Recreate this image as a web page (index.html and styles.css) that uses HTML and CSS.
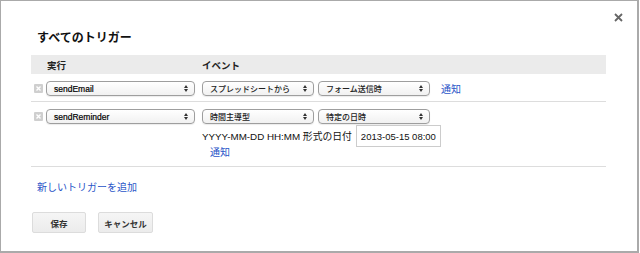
FILE: index.html
```html
<!DOCTYPE html>
<html lang="ja">
<head>
  <meta charset="UTF-8" />
  <title>すべてのトリガー</title>
  <link rel="stylesheet" href="styles.css">
</head>
<body>

  <div class="dialog">
    <!-- 閉じるボタン -->
    <button class="close" title="閉じる">
      <svg width="9" height="9" viewBox="0 0 9 9"><path d="M1 1 L8 8 M8 1 L1 8" stroke="#666" stroke-width="1.8"/></svg>
    </button>

    <h1 class="title">すべてのトリガー</h1>

    <div class="triggers">
      <div class="head">
        <span class="col-run">実行</span>
        <span class="col-event">イベント</span>
      </div>

      <!-- トリガー 1 -->
      <div class="trigger">
        <div class="col-run">
          <span class="remove"><svg width="9" height="9" viewBox="0 0 9 9"><path d="M2.5 2.5 L6.5 6.5 M6.5 2.5 L2.5 6.5" stroke="#fff" stroke-width="1.4"/></svg></span>
          <div class="select fn">sendEmail<span class="arrow"><svg width="4" height="7" viewBox="0 0 4 7"><path d="M0 3 L2 0 L4 3 Z M0 4 L2 7 L4 4 Z" fill="#333"/></svg></span></div>
        </div>
        <div class="col-event">
          <div class="line">
            <div class="select">スプレッドシートから<span class="arrow"><svg width="4" height="7" viewBox="0 0 4 7"><path d="M0 3 L2 0 L4 3 Z M0 4 L2 7 L4 4 Z" fill="#333"/></svg></span></div>
            <div class="select">フォーム送信時<span class="arrow"><svg width="4" height="7" viewBox="0 0 4 7"><path d="M0 3 L2 0 L4 3 Z M0 4 L2 7 L4 4 Z" fill="#333"/></svg></span></div>
            <a href="#" class="notify">通知</a>
          </div>
        </div>
      </div>

      <!-- トリガー 2 -->
      <div class="trigger">
        <div class="col-run">
          <span class="remove"><svg width="9" height="9" viewBox="0 0 9 9"><path d="M2.5 2.5 L6.5 6.5 M6.5 2.5 L2.5 6.5" stroke="#fff" stroke-width="1.4"/></svg></span>
          <div class="select fn">sendReminder<span class="arrow"><svg width="4" height="7" viewBox="0 0 4 7"><path d="M0 3 L2 0 L4 3 Z M0 4 L2 7 L4 4 Z" fill="#333"/></svg></span></div>
        </div>
        <div class="col-event">
          <div class="line">
            <div class="select">時間主導型<span class="arrow"><svg width="4" height="7" viewBox="0 0 4 7"><path d="M0 3 L2 0 L4 3 Z M0 4 L2 7 L4 4 Z" fill="#333"/></svg></span></div>
            <div class="select">特定の日時<span class="arrow"><svg width="4" height="7" viewBox="0 0 4 7"><path d="M0 3 L2 0 L4 3 Z M0 4 L2 7 L4 4 Z" fill="#333"/></svg></span></div>
          </div>
          <div class="line date">
            <span>YYYY-MM-DD HH:MM 形式の日付</span>
            <input type="text" class="date-input" value="2013-05-15 08:00" />
          </div>
          <div class="line sub">
            <a href="#" class="notify">通知</a>
          </div>
        </div>
      </div>
    </div>

    <a href="#" class="add">新しいトリガーを追加</a>

    <div class="buttons">
      <button class="btn save">保存</button>
      <button class="btn cancel">キャンセル</button>
    </div>
  </div>

</body>
</html>
```

FILE: styles.css
```css
body {
  margin: 0;
  font-family: "Liberation Sans", Arial, "Noto Sans CJK JP", sans-serif;
  font-size: 10px;
  color: #222;
  background-color: white;
}

.dialog {
  position: relative;
  box-sizing: border-box;
  width: 639px;
  height: 253px;
  padding: 29px 31px 0 30px;
  border: 1px solid #aaa;
  border-right-width: 2px;
  border-bottom-width: 2px;
  background-color: white;
}

.close {
  position: absolute;
  top: 12px;
  right: 14px;
  padding: 0;
  border: none;
  background: none;
  width: 9px;
  height: 9px;
  cursor: pointer;
}

.close svg {
  display: block;
}

.title {
  margin: 0 0 9px;
  padding-left: 6px;
  font-size: 12px;
  line-height: 16px;
  font-weight: bold;
  color: #111;
}

.head {
  display: grid;
  grid-template-columns: 171px 1fr;
  align-items: center;
  height: 19px;
  background-color: #ebebeb;
  font-size: 9.5px;
  font-weight: bold;
}

.head .col-run {
  padding-left: 16px;
}

.trigger {
  display: grid;
  grid-template-columns: 171px 1fr;
  align-items: start;
  padding: 7px 0 5px;
  border-bottom: 1px solid #ddd;
}

.trigger:last-child {
  padding-bottom: 7px;
}

.trigger .col-run {
  display: flex;
  align-items: center;
  gap: 3px;
  padding-left: 3px;
}

.remove {
  display: block;
  width: 9px;
  height: 9px;
  background-color: #cfcfcf;
  border-radius: 1px;
}

.remove svg {
  display: block;
}

.select {
  box-sizing: border-box;
  display: flex;
  align-items: center;
  justify-content: space-between;
  width: 112px;
  height: 15px;
  padding: 0 6px 0 7px;
  border: 1px solid #9e9e9e;
  border-radius: 4px;
  background: linear-gradient(#ffffff, #f1f1f1);
  box-shadow: 0 1px 1px rgba(0,0,0,0.08);
  font-family: "Noto Sans CJK JP", "Liberation Sans", sans-serif;
  font-size: 8px;
  font-weight: 500;
  color: #222;
  white-space: nowrap;
}

.select.fn {
  width: 149px;
  font-family: "Liberation Sans", Arial, sans-serif;
  font-weight: normal;
  font-size: 8.5px;
  color: #000;
  -webkit-text-stroke: 0.2px #000;
}

.arrow svg {
  display: block;
}

.line {
  display: flex;
  align-items: center;
  gap: 4px;
}

.line .notify {
  margin-left: 7px;
}

.line.date {
  margin-top: 1px;
  gap: 4px;
  font-size: 9.8px;
  color: #111;
}

.line.sub {
  line-height: 12px;
}

.line.sub .notify {
  margin-left: 8px;
}

.date-input {
  box-sizing: border-box;
  width: 85px;
  height: 22px;
  padding: 0 4px;
  border: 1px solid #ccc;
  font-family: "Liberation Sans", Arial, sans-serif;
  font-size: 9.5px;
  color: #111;
}

a {
  color: #2a55c8;
  text-decoration: none;
  font-size: 10px;
}

.add {
  display: block;
  margin-top: 15px;
  padding-left: 6px;
  line-height: 12px;
  width: max-content;
}

.buttons {
  display: flex;
  gap: 12px;
  margin-top: 18px;
  padding-left: 1px;
}

.btn {
  box-sizing: border-box;
  height: 21px;
  padding: 0;
  border: 1px solid #dcdcdc;
  border-radius: 2px;
  background: linear-gradient(#f5f5f5, #ececec);
  font-family: "Noto Sans CJK JP", sans-serif;
  font-size: 8.5px;
  font-weight: bold;
  color: #333;
  cursor: pointer;
}

.save {
  width: 54px;
}

.cancel {
  width: 55px;
}
```
